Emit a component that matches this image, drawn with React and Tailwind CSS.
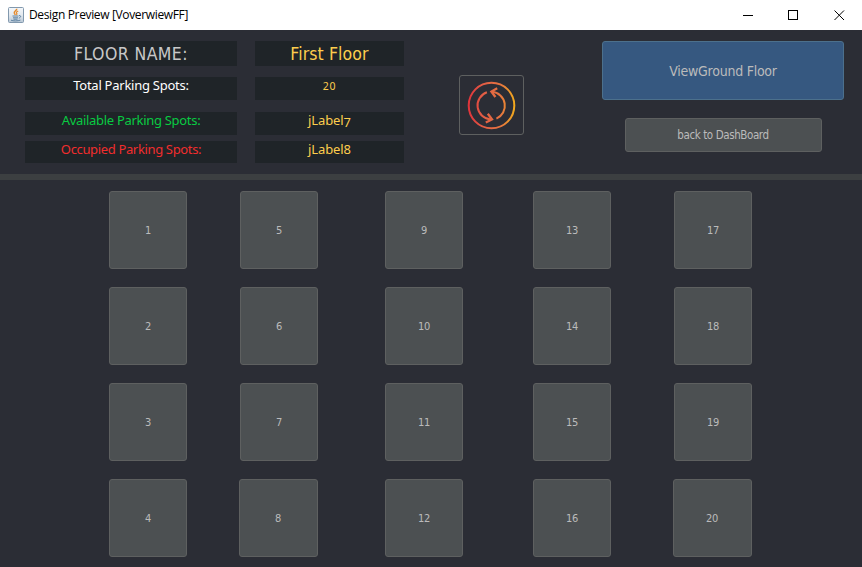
import React from "react";

const columns = [
  { margin: "ml-[109px]", spots: [1, 2, 3, 4] },
  { margin: "ml-[53px]", spots: [5, 6, 7, 8] },
  { margin: "ml-[67px]", spots: [9, 10, 11, 12] },
  { margin: "ml-[70px]", spots: [13, 14, 15, 16] },
  { margin: "ml-[63px]", spots: [17, 18, 19, 20] },
];

const tahoma = "font-['DejaVu_Sans_Condensed','DejaVu_Sans',sans-serif] [font-stretch:condensed]";
const corbel = "font-['Noto_Sans',sans-serif]";

function JavaIcon() {
  return (
    <svg width="16" height="16" viewBox="0 0 16 16" fill="none">
      <defs>
        <linearGradient id="tile" x1="0" y1="0" x2="0" y2="1">
          <stop offset="0" stopColor="#f4f7fa" />
          <stop offset="0.5" stopColor="#e3e9ef" />
          <stop offset="1" stopColor="#b7c6d4" />
        </linearGradient>
      </defs>
      <rect x="0.5" y="0.5" width="15" height="15" rx="1" fill="url(#tile)" stroke="#8299ae" />
      <path d="M8.6 1.7C9.4 3.4 5.2 4.3 6.4 6.3l1 1.5" stroke="#e58a2c" strokeWidth="1.5" />
      <path d="M10.2 4C8.4 4.8 7.9 5.4 8.8 6.5c.4.5.1 1-.4 1.5" stroke="#e58a2c" strokeWidth="1.2" />
      <path d="M4.5 9h6M5 10.8h5M5.5 12.2h4" stroke="#54799b" strokeWidth="0.9" />
      <path d="M11 8.6c2.3-.5 2.2 1.9-.2 2.5M3 13.2c2 1 7 .9 9.4-.1" stroke="#54799b" strokeWidth="0.9" />
    </svg>
  );
}

function RefreshIcon() {
  return (
    <svg width="49" height="49" viewBox="0 0 49 49" fill="none" stroke="url(#warm)" strokeWidth="2">
      <defs>
        <linearGradient id="warm" gradientUnits="userSpaceOnUse" x1="1" y1="24" x2="48" y2="24">
          <stop offset="0" stopColor="#e0323a" />
          <stop offset="0.3" stopColor="#e25b45" />
          <stop offset="0.7" stopColor="#e57540" />
          <stop offset="1" stopColor="#f2ab1c" />
        </linearGradient>
      </defs>
      <circle cx="24.5" cy="24.5" r="22.8" />
      <path d="M19.9 11.2A14 14 0 0 0 23.8 38.4" />
      <path d="M29.4 37.6A14 14 0 0 0 25 10.8" />
      <path d="M30.2 7.2L24.4 10.6L28.4 16" strokeWidth="2.3" />
      <path d="M18.8 41.6L25 38.4L20.8 32.8" strokeWidth="2.3" />
    </svg>
  );
}

function TitleBar() {
  return (
    <div className="flex h-[30px] items-center bg-white pl-2 text-black">
      <div className="-mt-px"><JavaIcon /></div>
      <span className="ml-[5px] whitespace-nowrap font-['Open_Sans',sans-serif] text-[12px] leading-[30px] tracking-[-0.35px]">
        Design Preview [VoverwiewFF]
      </span>
      <svg className="ml-auto mr-[16px]" width="105" height="12" viewBox="0 0 105 12" fill="none" stroke="#000" strokeWidth="1">
        <path d="M2 6.5h10" />
        <rect x="47.5" y="1.5" width="9" height="9" />
        <path d="M93.5 1.5l9.5 9.5M103 1.5l-9.5 9.5" />
      </svg>
    </div>
  );
}

function Field({ size, children }) {
  return <div className={`flex justify-center whitespace-nowrap bg-[#1f2428] ${size}`}>{children}</div>;
}

function Header() {
  return (
    <div className="flex h-[144px] items-start pl-[25px]">
      <div className={`mt-[11px] flex w-[212px] flex-col text-[13px] leading-[17px] ${corbel}`}>
        <Field size="h-[25px]">
          <span className={`text-[17.5px] leading-[26px] tracking-[0.42px] text-[#c8c8c8] ${tahoma}`}>FLOOR NAME:</span>
        </Field>
        <Field size="mt-[11px] h-[23px] tracking-[-0.25px] text-white">Total Parking Spots:</Field>
        <Field size="mt-[12px] h-[23px] tracking-[-0.3px] text-[#08cb42]">Available Parking Spots:</Field>
        <Field size="mt-[6px] h-[22px] tracking-[-0.35px] text-[#f12d2d]">Occupied Parking Spots:</Field>
      </div>
      <div className={`ml-[18px] mt-[11px] flex w-[149px] flex-col text-[13px] leading-[17px] tracking-[-0.1px] text-[#fdcd4d] ${corbel}`}>
        <Field size="h-[25px]">
          <span className={`text-[17.5px] leading-[26px] tracking-[0.1px] ${tahoma}`}>First Floor</span>
        </Field>
        <Field size="mt-[11px] h-[23px]">
          <span className="text-[10.5px] leading-[19px] tracking-[0.8px]">20</span>
        </Field>
        <Field size="mt-[12px] h-[23px]">
          jLabel<span className="relative top-[2px]">7</span>
        </Field>
        <Field size="mt-[6px] h-[22px]">jLabel8</Field>
      </div>
      <button className="ml-[55px] mt-[45px] flex h-[60px] w-[65px] items-center justify-center rounded-[3px] border border-[#5e6060]">
        <RefreshIcon />
      </button>
      <div className={`ml-[78px] mt-[11px] flex w-[242px] flex-col items-center text-[#bbbbbb] ${tahoma}`}>
        <button className="h-[59px] w-full rounded-[3px] border border-[#4c708c] bg-[#365880] pt-[2px] text-[14px] tracking-[-0.25px]">
          ViewGround Floor
        </button>
        <button className="mt-[18px] h-[34px] w-[197px] rounded-[3px] border border-[#5e6060] bg-[#4c5052] pt-px text-[11.5px] tracking-[-0.4px]">
          back to DashBoard
        </button>
      </div>
    </div>
  );
}

function Spot({ n }) {
  const wide = n === 8 || n === 20;
  return (
    <button
      className={`flex h-[78px] items-center justify-center rounded-[3px] border border-[#5e6060] bg-[#4c5052] pt-[2px] text-[11px] tracking-[-0.4px] text-[#bbbbbb] ${tahoma} ${
        wide ? "-ml-px w-[79px] pr-px" : "w-[78px]"
      }`}
    >
      {n}
    </button>
  );
}

export default function App() {
  return (
    <div className="flex h-[567px] w-[862px] flex-col overflow-hidden bg-[#2b2d35]">
      <TitleBar />
      <Header />
      <div className="h-[6px] bg-[#3c3f41]" />
      <div className="flex pt-[11px]">
        {columns.map(({ margin, spots }) => (
          <div key={spots[0]} className={`flex w-[78px] flex-col gap-[18px] ${margin}`}>
            {spots.map((n) => (
              <Spot key={n} n={n} />
            ))}
          </div>
        ))}
      </div>
    </div>
  );
}
